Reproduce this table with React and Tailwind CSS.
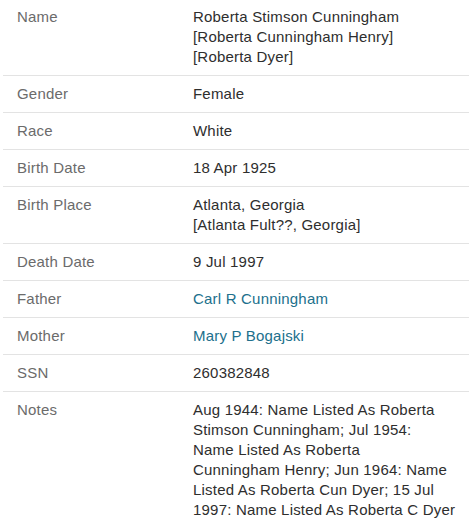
const rows = [
  {
    label: "Name",
    lines: ["Roberta Stimson Cunningham", "[Roberta Cunningham Henry]", "[Roberta Dyer]"],
  },
  { label: "Gender", lines: ["Female"] },
  { label: "Race", lines: ["White"] },
  { label: "Birth Date", lines: ["18 Apr 1925"] },
  { label: "Birth Place", lines: ["Atlanta, Georgia", "[Atlanta Fult??, Georgia]"] },
  { label: "Death Date", lines: ["9 Jul 1997"] },
  { label: "Father", link: "Carl R Cunningham" },
  { label: "Mother", link: "Mary P Bogajski" },
  { label: "SSN", lines: ["260382848"] },
  {
    label: "Notes",
    lines: [
      "Aug 1944: Name Listed As Roberta",
      "Stimson Cunningham; Jul 1954:",
      "Name Listed As Roberta",
      "Cunningham Henry; Jun 1964: Name",
      "Listed As Roberta Cun Dyer; 15 Jul",
      "1997: Name Listed As Roberta C Dyer",
    ],
  },
];

export default function App() {
  return (
    <div className="min-h-screen bg-white px-[3px] font-['Liberation_Sans',Arial,sans-serif] text-[15px] leading-5 tracking-[0.2px]">
      <div className="w-[466px]">
        {rows.map((row, i) => (
          <div
            key={row.label}
            className={
              "flex pb-2 " +
              (i === 0 ? "pt-[7px] " : "pt-2 ") +
              (i < rows.length - 1 ? "border-b border-[#e3e3e3]" : "")
            }
          >
            <div className="w-[190px] shrink-0 pl-[14px] text-[#6b6b6b]">{row.label}</div>
            <div className="flex-1 whitespace-nowrap text-[#2e2e2e]">
              {row.link ? (
                <a href="#" className="text-[#21708c]">
                  {row.link}
                </a>
              ) : (
                row.lines.map((l) => <div key={l}>{l}</div>)
              )}
            </div>
          </div>
        ))}
      </div>
    </div>
  );
}
